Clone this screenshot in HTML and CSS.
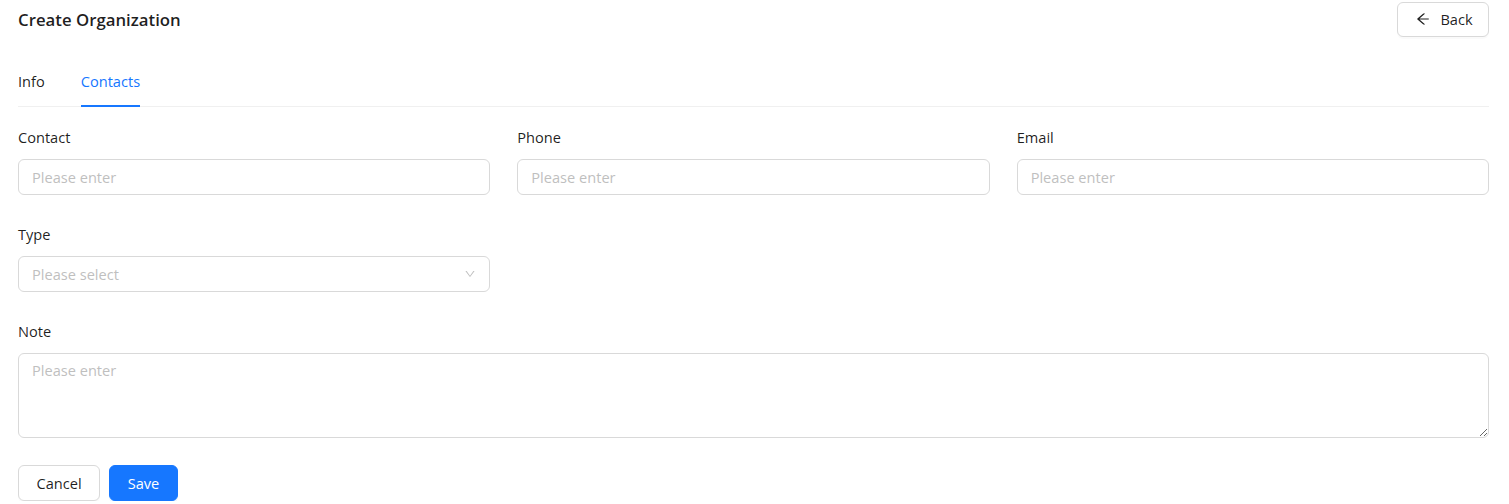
FILE: index.html
```html
<!DOCTYPE html>
<html>
<head>
<meta charset="utf-8">
<link rel="stylesheet" href="styles.css">
</head>
<body>
<div class="page">
  <div class="header">
    <div class="title">Create Organization</div>
    <button class="btn back">
      <svg width="16" height="16" viewBox="0 0 1024 1024" fill="currentColor"><path d="M872 474H286.9l350.2-304c5.6-4.9 2.2-14-5.2-14h-88.5c-3.9 0-7.6 1.4-10.5 3.9L155 487.8a31.960 31.960 0 000 48.3L535.1 866c1.5 1.300 3.3 2 5.2 2h91.5c7.4 0 10.8-9.2 5.2-14L286.9 550H872c4.4 0 8-3.6 8-8v-60c0-4.4-3.6-8-8-8z"/></svg>
      <span>Back</span>
    </button>
  </div>
  <div class="tabs">
    <div class="tab">Info</div>
    <div class="tab active">Contacts</div>
  </div>
  <form class="form">
    <div class="row three">
      <div class="item">
        <label class="label">Contact</label>
        <input class="input" placeholder="Please enter">
      </div>
      <div class="item">
        <label class="label">Phone</label>
        <input class="input" placeholder="Please enter">
      </div>
      <div class="item">
        <label class="label">Email</label>
        <input class="input" placeholder="Please enter">
      </div>
    </div>
    <div class="row three">
      <div class="item">
        <label class="label">Type</label>
        <div class="select">
          <span class="ph">Please select</span>
          <svg width="12" height="12" viewBox="0 0 1024 1024" fill="currentColor"><path d="M884 256h-75c-5.1 0-9.9 2.5-12.9 6.6L512 654.2 227.9 262.6c-3-4.1-7.8-6.6-12.9-6.6h-75c-6.5 0-10.3 7.4-6.5 12.7l352.6 486.1c12.8 17.6 39 17.6 51.7 0l352.6-486.1c3.9-5.3.1-12.7-6.4-12.7z"/></svg>
        </div>
      </div>
    </div>
    <div class="item">
      <label class="label">Note</label>
      <textarea class="textarea" placeholder="Please enter"></textarea>
    </div>
    <div class="actions">
      <button type="button" class="btn">Cancel</button>
      <button type="button" class="btn primary">Save</button>
    </div>
  </form>
</div>
</body>
</html>
```
FILE: styles.css
```css
* { box-sizing: border-box; }
html, body { margin: 0; padding: 0; background: #fff; }
body {
  font-family: "Open Sans", "Noto Sans", Arial, sans-serif;
  font-size: 14.6px;
  color: rgba(0,0,0,0.88);
}
.page { padding: 2px 20px 0 18px; }
.header {
  display: flex;
  justify-content: space-between;
  align-items: center;
  height: 35px;
}
.title { font-size: 16.8px; font-weight: 600; line-height: 24px; }
.btn {
  font-family: inherit;
  font-size: 14.6px;
  height: 36px;
  padding: 0 15px;
  border: 1px solid #d9d9d9;
  border-radius: 6px;
  background: #fff;
  color: rgba(0,0,0,0.88);
  display: inline-flex;
  align-items: center;
  justify-content: center;
  gap: 9px;
  cursor: pointer;
  box-shadow: 0 2px 0 rgba(0,0,0,0.02);
}
.back { padding: 0 14px 2px 16px; width: 92px; height: 35px; }
.tabs {
  margin-top: 23px;
  display: flex;
  gap: 36px;
  border-bottom: 1px solid #f0f0f0;
}
.tab {
  padding: 10px 0 14px;
  line-height: 22px;
  position: relative;
}
.tab.active { color: #1677ff; }
.tab.active::after {
  content: "";
  position: absolute;
  left: 0; right: 0; bottom: -1px;
  height: 2px;
  background: #1677ff;
}
.form { padding-top: 19px; }
.row.three {
  display: grid;
  grid-template-columns: repeat(3, 1fr);
  column-gap: 27px;
}
.item { display: flex; flex-direction: column; margin-bottom: 28px; }
.label { line-height: 22px; margin-bottom: 11px; }
.input, .select, .textarea {
  font-family: inherit;
  font-size: 14.6px;
  height: 36px;
  border: 1px solid #d9d9d9;
  border-radius: 6px;
  padding: 0 13px;
  color: rgba(0,0,0,0.88);
  background: #fff;
  outline: none;
  width: 100%;
}
.input::placeholder, .textarea::placeholder { color: #bfbfbf; }
.select {
  display: flex;
  align-items: center;
  justify-content: space-between;
  padding: 0 13px 0 13px;
  color: #bfbfbf;
}
.select svg { color: #c0c0c0; }
.textarea {
  height: 85px;
  padding: 5px 13px;
  line-height: 22px;
  resize: vertical;
  display: block;
}
.actions { display: flex; gap: 9px; margin-top: -1px; }
.actions .btn { padding: 0 17.5px 1px; }
.btn.primary {
  background: #1677ff;
  border-color: #1677ff;
  color: #fff;
  box-shadow: 0 2px 0 rgba(5,145,255,0.1);
}
```
